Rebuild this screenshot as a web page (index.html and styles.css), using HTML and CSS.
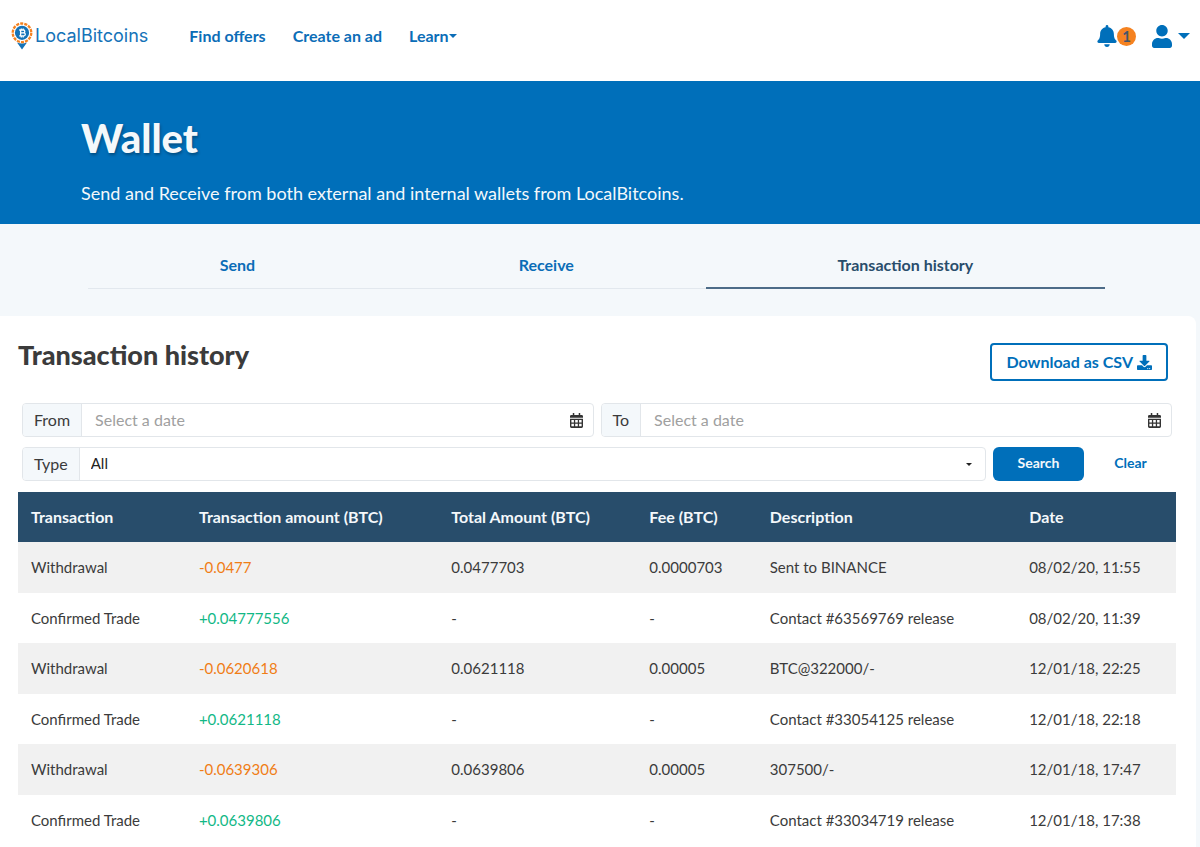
FILE: index.html
```html
<!DOCTYPE html>
<html lang="en">
<head>
<meta charset="utf-8">
<meta name="viewport" content="width=device-width, initial-scale=1">
<title>Wallet - LocalBitcoins</title>
<link rel="stylesheet" href="styles.css">
</head>
<body>
<header class="navbar">
  <a class="brand" href="#">
    <svg class="brand-mark" viewBox="0 0 22 28" aria-hidden="true">
      <path d="M6 20.500q5 2 10 0L11 27.500z" fill="#1573b8"/>
      <circle cx="11" cy="10.800" r="9.300" fill="#fff" stroke="#f58220" stroke-width="2.300" stroke-dasharray="3.100 1.070"/>
      <circle cx="11" cy="10.800" r="7.100" fill="#1573b8"/>
      <path d="M8.200 8h4.200a1.400 1.400 0 0 1 0 2.800H9.600h3.200a1.500 1.500 0 0 1 0 3H8.200M9.600 8v5.800M10.300 6.400V8M12.200 6.400V8M10.300 13.800v1.600M12.200 13.800v1.600" fill="none" stroke="#fff" stroke-width="1.300"/>
    </svg>
    <span class="brand-name">LocalBitcoins</span>
  </a>
  <nav class="nav-links">
    <a href="#">Find offers</a>
    <a href="#">Create an ad</a>
    <a class="has-caret" href="#">Learn<svg class="caret" viewBox="0 0 8 4" aria-hidden="true"><path d="M0 0h8L4 4z"/></svg></a>
  </nav>
  <div class="nav-tools">
    <button class="tool notifications" type="button" aria-label="Notifications">
      <svg class="bell" viewBox="0 0 448 512" aria-hidden="true"><path d="M224 512c35.300 0 63.900-28.700 63.900-64H160.100c0 35.300 28.600 64 63.900 64zm215.400-149.700c-19.300-20.800-55.500-52-55.500-154.300 0-77.700-54.500-139.900-127.900-155.200V32c0-17.700-14.300-32-32-32s-32 14.300-32 32v20.800C118.600 68.100 64.100 130.300 64.100 208c0 102.300-36.200 133.500-55.500 154.300-6 6.400-8.600 14.100-8.600 21.700.1 16.400 13 32 32.100 32h383.800c19.100 0 32-15.600 32.100-32 .1-7.600-2.600-15.300-8.600-21.700z"/></svg>
      <span class="badge">1</span>
    </button>
    <button class="tool account" type="button" aria-label="Account">
      <svg class="person" viewBox="0 0 448 512" aria-hidden="true"><path d="M224 256c70.700 0 128-57.300 128-128S294.700 0 224 0 96 57.300 96 128s57.300 128 128 128zm89.600 32h-16.700c-22.200 10.200-46.900 16-72.900 16s-50.600-5.800-72.900-16h-16.700C60.200 288 0 348.200 0 422.400V464c0 26.500 21.500 48 48 48h352c26.500 0 48-21.500 48-48v-41.600c0-74.200-60.200-134.400-134.400-134.400z"/></svg>
      <svg class="account-caret" viewBox="0 0 12 6" aria-hidden="true"><path d="M0 0h12L6 6z"/></svg>
    </button>
  </div>
</header>

<section class="hero">
  <h1>Wallet</h1>
  <p>Send and Receive from both external and internal wallets from LocalBitcoins.</p>
</section>

<nav class="tabs">
  <a href="#">Send</a>
  <a href="#">Receive</a>
  <a class="active" href="#" aria-current="page">Transaction history</a>
</nav>

<main class="card">
  <div class="card-head">
    <h2>Transaction history</h2>
    <button class="download" type="button">Download as CSV
      <svg viewBox="0 0 512 512" aria-hidden="true"><path d="M216 0h80c13.300 0 24 10.700 24 24v168h87.700c17.800 0 26.700 21.500 14.100 34.100L269.700 378.300c-7.500 7.500-19.800 7.500-27.300 0L90.100 226.100c-12.600-12.600-3.700-34.100 14.100-34.100H192V24c0-13.300 10.700-24 24-24zm296 376v112c0 13.300-10.700 24-24 24H24c-13.300 0-24-10.700-24-24V376c0-13.300 10.700-24 24-24h146.700l49 49c20.100 20.100 52.500 20.100 72.600 0l49-49H488c13.300 0 24 10.700 24 24zm-124 88c0-11-9-20-20-20s-20 9-20 20 9 20 20 20 20-9 20-20zm64 0c0-11-9-20-20-20s-20 9-20 20 9 20 20 20 20-9 20-20z"/></svg>
    </button>
  </div>

  <form class="filters">
    <div class="filter-row">
      <div class="field">
        <label for="from">From</label>
        <input id="from" type="text" placeholder="Select a date">
        <button class="calendar" type="button" aria-label="Open start date calendar">
          <svg viewBox="0 0 14 16" aria-hidden="true"><path fill-rule="evenodd" d="M3 0h1.600v2h4.800V0H11v2h1.500A1.500 1.500 0 0 1 14 3.500V5H0V3.500A1.500 1.500 0 0 1 1.500 2H3zM0 6h14v8.500a1.500 1.500 0 0 1-1.500 1.500h-11A1.500 1.500 0 0 1 0 14.500zM1.500 7.500v2.700h2.700V7.500zm4.100 0v2.700h2.800V7.500zm4.200 0v2.700h2.700V7.500zM1.500 11.600v2.700h2.700v-2.700zm4.100 0v2.700h2.800v-2.700zm4.200 0v2.700h2.700v-2.700z"/></svg>
        </button>
      </div>
      <div class="field">
        <label for="to">To</label>
        <input id="to" type="text" placeholder="Select a date">
        <button class="calendar" type="button" aria-label="Open end date calendar">
          <svg viewBox="0 0 14 16" aria-hidden="true"><path fill-rule="evenodd" d="M3 0h1.600v2h4.800V0H11v2h1.500A1.500 1.500 0 0 1 14 3.500V5H0V3.500A1.500 1.500 0 0 1 1.500 2H3zM0 6h14v8.500a1.500 1.500 0 0 1-1.500 1.500h-11A1.500 1.500 0 0 1 0 14.500zM1.500 7.500v2.700h2.700V7.500zm4.100 0v2.700h2.800V7.500zm4.200 0v2.700h2.700V7.500zM1.500 11.600v2.700h2.700v-2.700zm4.100 0v2.700h2.800v-2.700zm4.200 0v2.700h2.700v-2.700z"/></svg>
        </button>
      </div>
    </div>
    <div class="filter-row">
      <div class="field">
        <label for="type">Type</label>
        <select id="type"><option>All</option></select>
        <svg class="select-caret" viewBox="0 0 6 3" aria-hidden="true"><path d="M0 0h6L3 3z"/></svg>
      </div>
      <div class="actions">
        <button class="search" type="submit">Search</button>
        <button class="clear" type="reset">Clear</button>
      </div>
    </div>
  </form>

  <table class="history">
    <colgroup>
      <col class="col-kind"><col class="col-amount"><col class="col-total"><col class="col-fee"><col class="col-description"><col class="col-date">
    </colgroup>
    <thead>
      <tr><th>Transaction</th><th>Transaction amount (BTC)</th><th>Total Amount (BTC)</th><th>Fee (BTC)</th><th>Description</th><th>Date</th></tr>
    </thead>
    <tbody>
      <tr><td>Withdrawal</td><td class="out">-0.0477</td><td>0.0477703</td><td>0.0000703</td><td>Sent to BINANCE</td><td>08/02/20, 11:55</td></tr>
      <tr><td>Confirmed Trade</td><td class="in">+0.04777556</td><td>-</td><td>-</td><td>Contact #63569769 release</td><td>08/02/20, 11:39</td></tr>
      <tr><td>Withdrawal</td><td class="out">-0.0620618</td><td>0.0621118</td><td>0.00005</td><td>BTC@322000/-</td><td>12/01/18, 22:25</td></tr>
      <tr><td>Confirmed Trade</td><td class="in">+0.0621118</td><td>-</td><td>-</td><td>Contact #33054125 release</td><td>12/01/18, 22:18</td></tr>
      <tr><td>Withdrawal</td><td class="out">-0.0639306</td><td>0.0639806</td><td>0.00005</td><td>307500/-</td><td>12/01/18, 17:47</td></tr>
      <tr><td>Confirmed Trade</td><td class="in">+0.0639806</td><td>-</td><td>-</td><td>Contact #33034719 release</td><td>12/01/18, 17:38</td></tr>
    </tbody>
  </table>
</main>
</body>
</html>
```

FILE: styles.css
```css
* { box-sizing: border-box; }

body {
  margin: 0;
  min-height: 100vh;
  display: flex;
  flex-direction: column;
  background: #f4f8fb;
  color: #3b3b3b;
  font-family: Muli, Lato, "Open Sans", sans-serif;
  font-size: 16px;
  line-height: 20px;
}

a { color: #0b6db7; text-decoration: none; }
button, input, select { font: inherit; }
button { cursor: pointer; }
svg { fill: currentColor; flex: none; }

/* Top bar */
.navbar {
  display: flex;
  align-items: center;
  padding: 21px 10px 30px 11px;
  background: #fff;
}
.brand { display: flex; align-items: center; gap: 2px; height: 30px; }
.brand-mark { width: 22px; height: 28px; }
.brand-name {
  color: #1573b8;
  font-family: Inter, "Liberation Sans", sans-serif;
  font-size: 18px;
}
.nav-links { display: flex; gap: 27px; margin-left: 41px; font-weight: 700; }
.has-caret { display: flex; align-items: center; }
.caret { width: 8px; height: 4px; }
.nav-tools { display: flex; align-items: center; gap: 16px; margin-left: auto; }
.tool {
  display: flex;
  align-items: center;
  padding: 0;
  border: 0;
  background: none;
  color: #006fba;
}
.bell { width: 20px; height: 22px; }
.badge {
  width: 19px;
  height: 19px;
  border-radius: 50%;
  background: #f58220;
  color: #44566b;
  font-size: 15px;
  font-weight: 700;
  line-height: 19px;
  text-align: center;
}
.account { gap: 6px; }
.person { width: 20px; height: 23px; }
.account-caret { width: 12px; height: 6px; }

/* Page heading */
.hero { padding: 33px 81px 20px; background: #006fba; color: #f4f8fb; }
.hero h1 {
  margin: 0 0 20px;
  font-size: 40px;
  font-weight: 900;
  line-height: 48px;
  text-shadow: 1px 2px 3px rgba(0, 0, 0, 0.3);
}
.hero p { margin: 0; font-size: 18px; line-height: 22px; }

/* Tabs */
.tabs { display: flex; margin: 24px 95px 27px 88px; font-weight: 700; }
.tabs a {
  flex: 1 1 auto;
  padding: 7px 0 12px;
  border-bottom: 1px solid #e2e8ee;
  text-align: center;
}
.tabs .active { border-bottom: 2px solid #4d6c88; color: #294d6b; }

/* Card */
.card {
  flex: 1;
  margin-right: 4px;
  padding: 27px 20px 0 18px;
  border-top-right-radius: 8px;
  background: #fff;
}
.card-head {
  display: flex;
  align-items: flex-start;
  justify-content: space-between;
  padding-right: 8px;
  margin-bottom: 22px;
}
.card-head h2 { margin: 0; font-size: 27px; font-weight: 900; line-height: 24px; }
.download {
  display: flex;
  align-items: center;
  gap: 4px;
  height: 38px;
  padding: 0 14px;
  border: 2px solid #006fba;
  border-radius: 4px;
  background: #fff;
  color: #006fba;
  font-weight: 700;
}
.download svg { width: 15px; height: 15px; }

/* Filters */
.filters { display: grid; gap: 10px; padding: 0 4px; margin-bottom: 11px; }
.filter-row { display: flex; gap: 7px; }
.field {
  display: flex;
  flex: 1;
  align-items: center;
  min-width: 0;
  height: 34px;
  border: 1px solid #e2e6ea;
  border-radius: 4px;
  background: #fff;
}
.field label {
  height: 32px;
  padding: 0 11px;
  border-right: 1px solid #e2e6ea;
  border-radius: 3px 0 0 3px;
  background: #f4f8fb;
  line-height: 31px;
}
.field input {
  flex: 1;
  min-width: 0;
  height: 32px;
  padding: 0 13px 2px;
  border: 0;
  background: none;
}
.field input::placeholder { color: #a0a0a0; }
.calendar { display: flex; padding: 0 10px; border: 0; background: none; color: #333; }
.calendar svg { width: 13px; height: 15px; }
.field select {
  flex: 1;
  height: 32px;
  padding: 0 11px 2px;
  border: 0;
  background: none;
  color: #222;
  font-size: 15px;
  appearance: none;
}
.select-caret { width: 6px; height: 3px; margin-right: 13px; color: #222; }
.actions { display: flex; gap: 5px; font-size: 14px; font-weight: 700; }
.search, .clear { width: 91px; height: 34px; padding: 0 0 2px; border: 0; border-radius: 6px; }
.search { background: #006fba; color: #f4f8fb; }
.clear { width: 83px; background: none; color: #006fba; }

/* Transactions */
.history { width: 100%; border-collapse: collapse; table-layout: fixed; }
.col-kind { width: 14.5%; }
.col-amount { width: 21.8%; }
.col-total { width: 17.1%; }
.col-fee { width: 10.4%; }
.col-description { width: 22.4%; }
.col-date { width: 13.8%; }
.history th, .history td { height: 50px; padding: 0 0 1px 13px; text-align: left; white-space: nowrap; }
.history td { font-size: 15px; }
.history th { background: #284d6b; color: #f4f8fb; font-weight: 700; }
.history tbody tr:nth-child(odd) { background: #f1f1f1; }
.history tbody tr:nth-child(odd) td { height: 51px; }
.history .out { color: #f07d16; }
.history .in { color: #12b886; }
```
